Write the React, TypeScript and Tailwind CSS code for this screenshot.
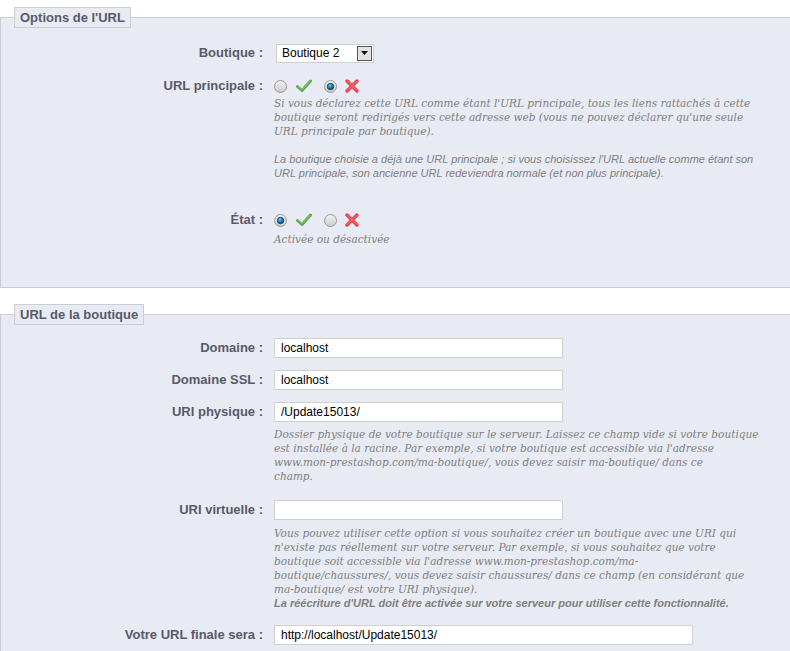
import type { ReactNode } from 'react'

const sans = "font-['Liberation_Sans',Arial,sans-serif]"
const serif = "font-['DejaVu_Serif',Georgia,serif]"

function Radio({ checked }: { checked?: boolean }) {
  return (
    <svg width="13" height="13" viewBox="0 0 13 13" className="shrink-0">
      <defs>
        <linearGradient id="rg" x1="0" y1="0" x2="0" y2="1">
          <stop offset="0" stopColor="#f4f4f4" />
          <stop offset="1" stopColor="#c9c9c9" />
        </linearGradient>
        <radialGradient id="dot" cx="0.4" cy="0.35" r="0.7">
          <stop offset="0" stopColor="#7fd0f5" />
          <stop offset="0.5" stopColor="#1b7fc0" />
          <stop offset="1" stopColor="#0b3a5e" />
        </radialGradient>
      </defs>
      <circle cx="6.5" cy="6.5" r="6" fill="url(#rg)" stroke="#9a9a9a" />
      {checked && <circle cx="6.5" cy="6.5" r="3.2" fill="url(#dot)" stroke="#1c3650" strokeWidth="0.8" />}
    </svg>
  )
}

function Check() {
  return (
    <svg width="16" height="14" viewBox="0 0 16 14" className="shrink-0">
      <path d="M1.5 7.5 L6 11.5 L14.5 2" fill="none" stroke="#5aa84a" strokeWidth="3" strokeLinecap="round" strokeLinejoin="round" />
      <path d="M2 7.2 L6 10.6 L14 2.3" fill="none" stroke="#8fd07a" strokeWidth="1" strokeLinecap="round" />
    </svg>
  )
}

function Cross() {
  return (
    <svg width="16" height="16" viewBox="0 0 16 16" className="shrink-0">
      <path d="M3 3 L13 13 M13 3 L3 13" fill="none" stroke="#ea3e4b" strokeWidth="3.4" strokeLinecap="round" />
      <path d="M3.5 3.3 L12.5 12.3 M12.5 3.3 L3.5 12.3" fill="none" stroke="#ff8e96" strokeWidth="0.8" strokeLinecap="round" />
    </svg>
  )
}

function Row({ label, children, className = '' }: { label: string; children: ReactNode; className?: string }) {
  return (
    <div className={`flex items-center ${className}`}>
      <label className={`w-[263px] shrink-0 pr-[1px] text-right text-[13px] font-bold text-[#585a69] ${sans}`}>{label}</label>
      <div className="ml-[10px] flex items-center">{children}</div>
    </div>
  )
}

function Help({ children, className = '' }: { children: ReactNode; className?: string }) {
  return (
    <p className={`ml-[273px] whitespace-nowrap text-[10.5px] italic leading-[14px] text-[#7f7f7f] ${serif} ${className}`}>
      {children}
    </p>
  )
}

function TextInput({ value, width = 'w-[289px]' }: { value: string; width?: string }) {
  return (
    <input
      readOnly
      value={value}
      className={`h-[20px] ${width} border border-[#cfcfcf] bg-white px-[6px] text-[12px] text-black outline-none ${sans}`}
    />
  )
}

function Legend({ children }: { children: ReactNode }) {
  return (
    <legend className={`ml-[13px] h-[21px] border border-[#ccced7] bg-[#e8ebf3] px-[5px] text-[13px] font-bold leading-[19px] text-[#585a69] ${sans}`}>
      {children}
    </legend>
  )
}

export default function App() {
  return (
    <div className="h-[651px] w-[790px] overflow-hidden bg-white pt-[7px]">
      <fieldset className="w-[800px] border border-r-0 border-[#ccced7] bg-[#e8ebf3] pb-[41px]">
        <Legend>Options de l'URL</Legend>

        <Row label="Boutique :" className="mt-[16px] h-[18px]">
          <div className={`ml-[2px] flex h-[19px] w-[98px] items-center border border-[#cfcfcf] bg-white text-[12px] text-black ${sans}`}>
            <span className="flex-1 pl-[5px]">Boutique 2</span>
            <span className="mr-[1px] flex h-[15px] w-[15px] items-center justify-center border border-[#555] bg-[#e2e2e2]">
              <svg width="7" height="4" viewBox="0 0 7 4">
                <path d="M0 0 L7 0 L3.5 4 Z" fill="#111" />
              </svg>
            </span>
          </div>
        </Row>

        <Row label="URL principale :" className="mt-[16px] h-[16px]">
          <div className="flex items-center">
            <Radio />
            <span className="ml-[9px]"><Check /></span>
            <span className="ml-[12px]"><Radio checked /></span>
            <span className="ml-[7px]"><Cross /></span>
          </div>
        </Row>
        <Help className="mt-[2px]">
          Si vous déclarez cette URL comme étant l'URL principale, tous les liens rattachés à cette
          <br />
          boutique seront redirigés vers cette adresse web (vous ne pouvez déclarer qu'une seule
          <br />
          URL principale par boutique).
          <br />
          <br />
          <span className={`text-[11px] ${sans}`}>
            La boutique choisie a déjà une URL principale ; si vous choisissez l'URL actuelle comme étant son
            <br />
            URL principale, son ancienne URL redeviendra normale (et non plus principale).
          </span>
        </Help>

        <Row label="État :" className="mt-[32px] h-[16px]">
          <div className="flex items-center">
            <Radio checked />
            <span className="ml-[9px]"><Check /></span>
            <span className="ml-[12px]"><Radio /></span>
            <span className="ml-[7px]"><Cross /></span>
          </div>
        </Row>
        <Help className="mt-[4px]">Activée ou désactivée</Help>
      </fieldset>

      <fieldset className="mt-[16px] w-[800px] border border-r-0 border-[#ccced7] bg-[#e8ebf3] pb-[40px]">
        <Legend>URL de la boutique</Legend>

        <Row label="Domaine :" className="mt-[13px]">
          <TextInput value="localhost" />
        </Row>
        <Row label="Domaine SSL :" className="mt-[12px]">
          <TextInput value="localhost" />
        </Row>
        <Row label="URI physique :" className="mt-[12px]">
          <TextInput value="/Update15013/" />
        </Row>
        <Help className="mt-[5px]">
          Dossier physique de votre boutique sur le serveur. Laissez ce champ vide si votre boutique
          <br />
          est installée à la racine. Par exemple, si votre boutique est accessible via l'adresse
          <br />
          www.mon-prestashop.com/ma-boutique/, vous devez saisir ma-boutique/ dans ce
          <br />
          champ.
        </Help>

        <Row label="URI virtuelle :" className="mt-[17px]">
          <TextInput value="" />
        </Row>
        <Help className="mt-[6px]">
          Vous pouvez utiliser cette option si vous souhaitez créer un boutique avec une URI qui
          <br />
          n'existe pas réellement sur votre serveur. Par exemple, si vous souhaitez que votre
          <br />
          boutique soit accessible via l'adresse www.mon-prestashop.com/ma-
          <br />
          boutique/chaussures/, vous devez saisir chaussures/ dans ce champ (en considérant que
          <br />
          ma-boutique/ est votre URI physique).
          <br />
          <span className={`text-[11px] font-bold ${sans}`}>
            La réécriture d'URL doit être activée sur votre serveur pour utiliser cette fonctionnalité.
          </span>
        </Help>

        <Row label="Votre URL finale sera :" className="mt-[15px]">
          <TextInput value="http://localhost/Update15013/" width="w-[419px]" />
        </Row>
      </fieldset>
    </div>
  )
}
